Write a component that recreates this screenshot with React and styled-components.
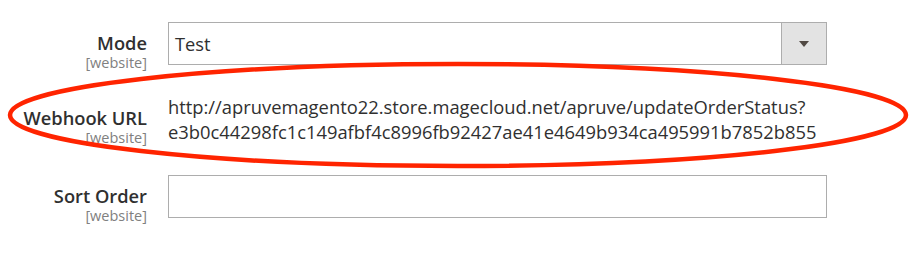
import React from "react";
import styled, { createGlobalStyle } from "styled-components";

const Global = createGlobalStyle`
  html, body { margin: 0; padding: 0; background: #fff; }
  body { font-family: "Open Sans", "Liberation Sans", sans-serif; color: #303030; }
`;

const Page = styled.div`
  position: relative;
  width: 912px;
  height: 279px;
  box-sizing: border-box;
  padding-top: 22px;
  overflow: hidden;
`;

const Form = styled.div`
  display: flex;
  flex-direction: column;
`;

const Row = styled.div`
  display: grid;
  grid-template-columns: 147px 659px;
  column-gap: 21px;
  align-items: start;
  height: ${(p) => p.h}px;
`;

const LabelCell = styled.div`
  display: flex;
  flex-direction: column;
  align-items: flex-end;
  text-align: right;
  padding-top: ${(p) => p.pt}px;
`;

const LabelText = styled.span`
  font-size: 18.3px;
  line-height: 22px;
  font-weight: 600;
  color: #303030;
  white-space: nowrap;
`;

const Scope = styled.span`
  font-size: 14.5px;
  line-height: 18px;
  color: #808080;
  white-space: nowrap;
`;

const Control = styled.div`
  margin-top: ${(p) => p.mt || 0}px;
`;

const SelectBox = styled.div`
  display: flex;
  height: 43px;
  box-sizing: border-box;
  border: 1px solid #adadad;
  background: #fff;
`;

const SelectValue = styled.div`
  flex: 1;
  padding-left: 6px;
  font-size: 18.3px;
  line-height: 41px;
  color: #303030;
`;

const SelectButton = styled.div`
  width: 44px;
  border-left: 1px solid #adadad;
  background: #e3e3e3;
  display: flex;
  align-items: center;
  justify-content: center;
`;

const Arrow = styled.div`
  width: 0;
  height: 0;
  border-left: 5.5px solid transparent;
  border-right: 5.5px solid transparent;
  border-top: 6.5px solid #514943;
  margin-top: 1px;
`;

const UrlText = styled.div`
  font-size: 18.35px;
  line-height: 25px;
  color: #303030;
  white-space: pre;
`;

const TextInput = styled.div`
  height: 43px;
  box-sizing: border-box;
  border: 1px solid #adadad;
  background: #fff;
`;

const Highlight = styled.svg`
  position: absolute;
  left: 0;
  top: 0;
  pointer-events: none;
`;

export default function App() {
  return (
    <>
      <Global />
      <Page>
        <Form>
          <Row h={43}>
            <LabelCell pt={10}>
              <LabelText>Mode</LabelText>
              <Scope>[website]</Scope>
            </LabelCell>
            <Control>
              <SelectBox>
                <SelectValue>Test</SelectValue>
                <SelectButton>
                  <Arrow />
                </SelectButton>
              </SelectBox>
            </Control>
          </Row>
          <Row h={110}>
            <LabelCell pt={42}>
              <LabelText>Webhook URL</LabelText>
              <Scope>[website]</Scope>
            </LabelCell>
            <Control mt={29}>
              <UrlText>
                {"http://apruvemagento22.store.magecloud.net/apruve/updateOrderStatus?\ne3b0c44298fc1c149afbf4c8996fb92427ae41e4649b934ca495991b7852b855"}
              </UrlText>
            </Control>
          </Row>
          <Row h={43}>
            <LabelCell pt={10}>
              <LabelText>Sort Order</LabelText>
              <Scope>[website]</Scope>
            </LabelCell>
            <Control>
              <TextInput />
            </Control>
          </Row>
        </Form>
        <Highlight width="912" height="279" viewBox="0 0 912 279">
          <ellipse
            cx="458"
            cy="115"
            rx="448"
            ry="51"
            fill="none"
            stroke="#ff2400"
            strokeWidth="4.5"
          />
        </Highlight>
      </Page>
    </>
  );
}
